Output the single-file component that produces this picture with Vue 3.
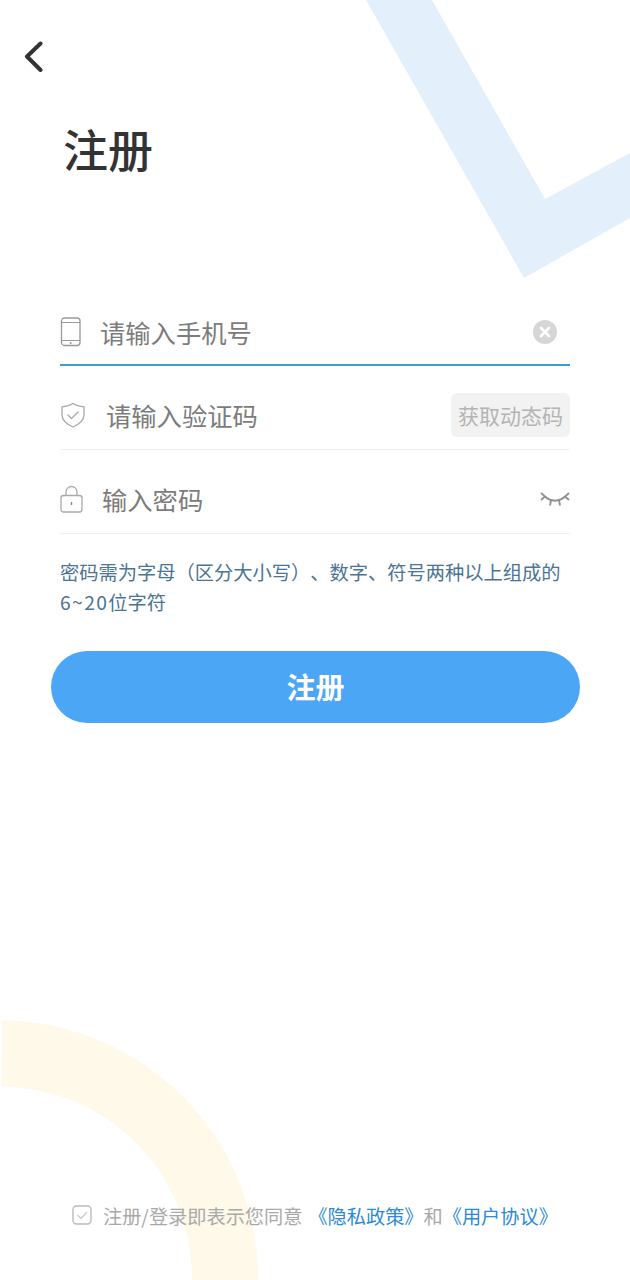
<script setup>
const hint = '密码需为字母（区分大小写）、数字、符号两种以上组成的';
</script>

<template>
  <div class="page">
    <svg class="deco" width="630" height="1280" viewBox="0 0 630 1280" aria-hidden="true">
      <polygon points="366,0 432,0 545,199 630,153 630,218 524,278" fill="#e3f0fc" />
      <path d="M2 1053.5 A 225 225 0 0 1 225 1280" fill="none" stroke="#fff9ea" stroke-width="66" />
    </svg>

    <div class="content">
      <button class="back" aria-label="返回">
        <svg width="20" height="32" viewBox="0 0 20 32">
          <path d="M17.5 3.5 L4 16.5 L17.5 30" fill="none" stroke="#333" stroke-width="4" stroke-linecap="round" stroke-linejoin="round" />
        </svg>
      </button>

      <h1 class="title">注册</h1>

      <div class="form">
        <div class="row row-active">
          <svg class="icon" width="22" height="30" viewBox="0 0 22 30">
            <rect x="1.5" y="1" width="18.5" height="27.5" rx="3" fill="none" stroke="#999" stroke-width="1.3" />
            <path d="M1.5 5.5H20M1.5 23.5H20" stroke="#999" stroke-width="1.1" />
            <circle cx="10.7" cy="26" r="1" fill="#999" />
          </svg>
          <span class="ph ph-phone">请输入手机号</span>
          <span class="clear">
            <svg width="24" height="24" viewBox="0 0 24 24">
              <circle cx="12" cy="12" r="12" fill="#d6d6d6" />
              <path d="M8 8L16 16M16 8L8 16" stroke="#fff" stroke-width="2.6" stroke-linecap="round" />
            </svg>
          </span>
        </div>

        <div class="row row-code">
          <svg class="icon" width="26" height="26" viewBox="0 0 26 26">
            <path d="M13 1.5 C16 3.5 20 4.5 24 4.8 V13 C24 18.5 18.5 22.5 13 25 C7.5 22.5 2 18.5 2 13 V4.8 C6 4.5 10 3.5 13 1.5Z" fill="none" stroke="#aaa" stroke-width="1.3" />
            <path d="M7.5 12.5 L11.5 16.5 L18.5 9.5" fill="none" stroke="#aaa" stroke-width="1.3" />
          </svg>
          <span class="ph ph-code">请输入验证码</span>
          <span class="code-btn">获取动态码</span>
        </div>

        <div class="row row-pass">
          <svg class="icon" width="23" height="28" viewBox="0 0 23 28">
            <rect x="1" y="10.5" width="21" height="16.5" rx="2.5" fill="none" stroke="#aaa" stroke-width="1.3" />
            <path d="M6 10.5 V7 A5.5 5.5 0 0 1 17 7 V10.5" fill="none" stroke="#aaa" stroke-width="1.3" />
            <path d="M11.5 17V20" stroke="#888" stroke-width="1.4" />
          </svg>
          <span class="ph ph-pass">输入密码</span>
          <svg class="eye" width="30" height="16" viewBox="0 0 30 16">
            <path d="M5 5.5 C11 11 19 11 25 5.5" fill="none" stroke="#8f8f8f" stroke-width="2" />
            <path d="M1 2L5 5.5L1 9M29 2L25 5.5L29 9M11 9L10 14.5M19 9L20 14.5" fill="none" stroke="#8f8f8f" stroke-width="1.8" />
          </svg>
        </div>
      </div>

      <p class="hint">{{ hint }}<br /><span class="nums">6~20</span>位字符</p>

      <button class="submit">注册</button>
    </div>

    <div class="agree">
      <svg width="20" height="20" viewBox="0 0 20 20">
        <rect x="1" y="1" width="18" height="18" rx="3.5" fill="none" stroke="#bbb" stroke-width="1.4" />
        <path d="M5.5 10 L9 13.5 L15 7" fill="none" stroke="#ccc" stroke-width="1.3" />
      </svg>
      <span class="agree-text">注册/登录即表示您同意</span>
      <a class="link link-first">《隐私政策》</a>
      <span class="agree-and">和</span>
      <a class="link">《用户协议》</a>
    </div>
  </div>
</template>

<style>
html, body { margin: 0; padding: 0; background: #fff; }
</style>

<style scoped>
.page {
  position: relative;
  width: 630px;
  height: 1280px;
  overflow: hidden;
  background: #fff;
  font-family: "Noto Sans CJK SC", "Noto Sans", sans-serif;
  text-spacing-trim: space-all;
}
.deco { position: absolute; left: 0; top: 0; }
.content {
  position: relative;
  display: flex;
  flex-direction: column;
  padding: 40px 60px 0;
}
.back {
  align-self: flex-start;
  margin-left: -37px;
  padding: 0;
  width: 20px;
  height: 32px;
  border: 0;
  background: none;
  display: block;
}
.back svg { display: block; }
.title {
  margin: 45px 0 0 3px;
  font-size: 45px;
  line-height: 64px;
  font-weight: 500;
  color: #333;
}
.form { margin-top: 102px; display: flex; flex-direction: column; }
.row {
  display: flex;
  align-items: center;
  box-sizing: content-box;
  border-bottom: 1px solid #f0f0f0;
  height: 69px;
  padding-top: 14px;
  flex: none;
}
.row-active { height: 65px; padding-top: 16px; border-bottom: 2px solid #3f9bd0; }
.icon { flex: none; display: block; }
.ph { font-size: 25.3px; line-height: 36px; color: #7c7c7c; }
.ph-phone { margin-left: 18px; }
.ph-code { margin-left: 20px; }
.ph-pass { margin-left: 19px; }
.clear { margin-left: auto; margin-right: 13px; display: flex; }
.code-btn {
  margin-left: auto;
  width: 119px;
  height: 44px;
  border-radius: 6px;
  background: #f2f2f2;
  color: #b4b4b4;
  font-size: 21px;
  line-height: 44px;
  text-align: center;
  margin-top: 1px;
}
.eye { margin-left: auto; display: block; }
.hint {
  margin: 23px 0 0;
  font-size: 19.25px;
  line-height: 30px;
  color: #4a7594;
  white-space: nowrap;
}
.nums { letter-spacing: 1.4px; }
.submit {
  margin: 34px -10px 0 -9px;
  height: 72px;
  border: 0;
  border-radius: 36px;
  background: #4ca6f6;
  color: #fff;
  font-family: inherit;
  font-size: 29px;
  font-weight: 700;
  padding: 0 0 2px;
}
.agree {
  position: absolute;
  left: 72px;
  right: 0;
  top: 1201px;
  display: flex;
  align-items: center;
  height: 30px;
  font-size: 19.2px;
}
.agree > svg { margin-top: -3px; }
.agree-text { color: #a9a9a9; margin-left: 11px; white-space: nowrap; }
.agree-and { color: #a9a9a9; white-space: nowrap; }
.link { color: #2d8ad6; white-space: nowrap; }
.link-first { margin-left: 6px; }
</style>
